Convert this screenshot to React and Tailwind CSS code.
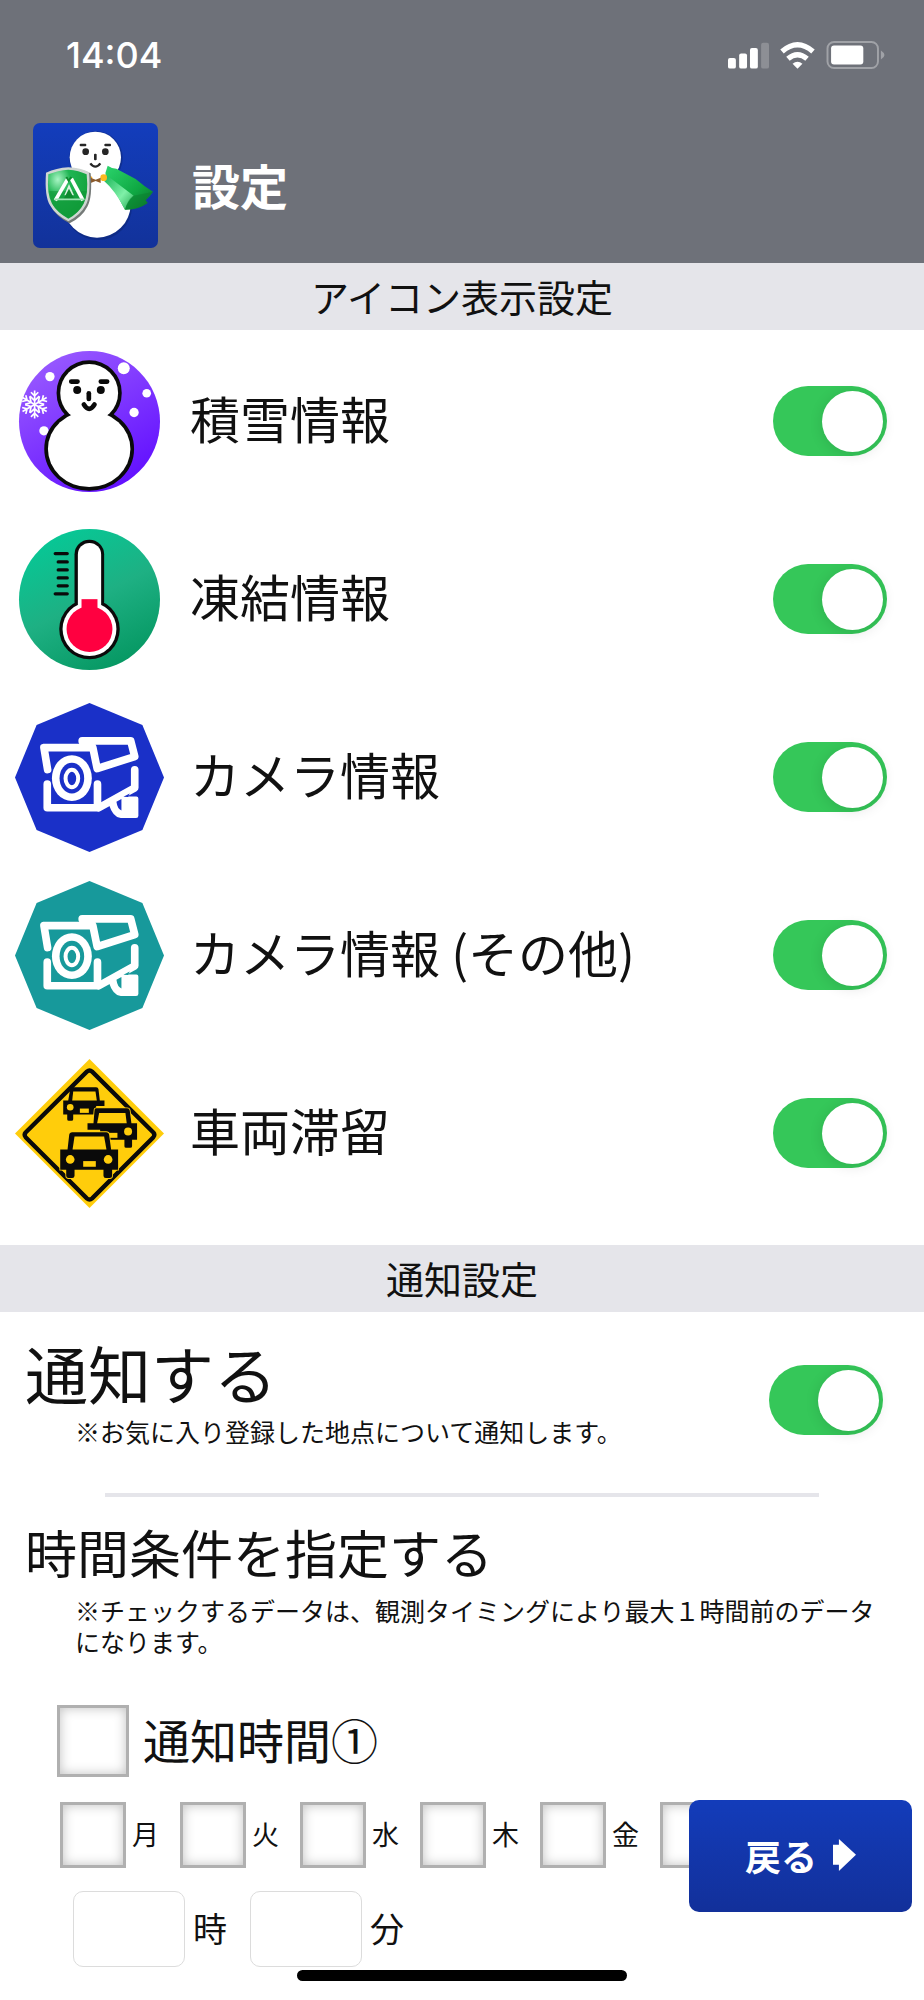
import React, { useState } from "react";

function StatusIcons() {
  return (
    <div className="flex items-center gap-[11px]">
      <svg viewBox="0 0 125 80" className="h-[27px] w-[41px]" aria-hidden="true">
        <rect x="0" y="48" width="24" height="32" rx="6" fill="#fff" />
        <rect x="34" y="34" width="24" height="46" rx="6" fill="#fff" />
        <rect x="67" y="17" width="24" height="63" rx="6" fill="#fff" />
        <rect x="101" y="1" width="24" height="79" rx="6" fill="#8d8f95" />
      </svg>
      <svg viewBox="0 0 106 82" className="h-[27px] w-[35px]" aria-hidden="true">
        <g fill="none" stroke="#fff" strokeWidth="16">
          <path d="M6 29 Q53 -12 100 29" />
          <path d="M24 51 Q53 26 82 51" />
        </g>
        <path d="M53 81 L38 66 Q53 54 68 66Z" fill="#fff" />
      </svg>
      <svg viewBox="0 0 178 86" className="h-[28px] w-[59px]" aria-hidden="true">
        <rect x="3" y="3" width="155" height="80" rx="20" fill="none" stroke="#a0a2a7" strokeWidth="6" />
        <rect x="14" y="14" width="99" height="58" rx="9" fill="#fff" />
        <path d="M167 29 Q178 36 178 43 Q178 50 167 57Z" fill="#a0a2a7" />
      </svg>
    </div>
  );
}

function AppLogo() {
  return (
    <svg viewBox="40 39 375 375" className="size-[125px] shrink-0 rounded-[7px]" role="img" aria-label="アプリアイコン">
      <defs>
        <linearGradient id="logoBg" x1="0" y1="0" x2="0" y2="1">
          <stop offset="0" stopColor="#133dbc" />
          <stop offset="1" stopColor="#12329a" />
        </linearGradient>
        <linearGradient id="logoCape" x1="0" y1="0" x2="1" y2="1">
          <stop offset="0" stopColor="#2bd46c" />
          <stop offset="0.6" stopColor="#0fa843" />
          <stop offset="1" stopColor="#0a6f28" />
        </linearGradient>
        <linearGradient id="logoFold" x1="0" y1="0" x2="1" y2="1">
          <stop offset="0" stopColor="#16b455" />
          <stop offset="0.6" stopColor="#7ff0a8" />
          <stop offset="1" stopColor="#22a850" />
        </linearGradient>
        <radialGradient id="logoShield" cx="0.25" cy="0.2" r="0.9">
          <stop offset="0" stopColor="#a8f5c4" />
          <stop offset="0.35" stopColor="#1fb553" />
          <stop offset="1" stopColor="#12a03a" />
        </radialGradient>
      </defs>
      <rect x="40" y="39" width="375" height="375" fill="url(#logoBg)" />
      <g fill="#0c2470" opacity="0.5">
        <circle cx="229" cy="144" r="80" />
        <circle cx="235" cy="288" r="102" />
      </g>
      <circle cx="227" cy="142" r="77" fill="#fff" />
      <circle cx="232" cy="282" r="101" fill="#fff" />
      <g fill="#262626">
        <rect x="180" y="101" width="20" height="8" rx="3" />
        <rect x="254" y="101" width="20" height="8" rx="3" />
        <circle cx="198" cy="125" r="10" />
        <circle cx="257" cy="125" r="10" />
        <rect x="223" y="131" width="8" height="20" rx="3" />
      </g>
      <path d="M212 160 Q227 180 242 160" fill="none" stroke="#262626" strokeWidth="7" />
      <path d="M257 190 L264 167 Q275 175 290 176 L348 207 Q372 228 400 245 Q392 258 378 271 L384 279 Q355 300 316 299Z" fill="url(#logoCape)" />
      <path d="M257 193 L342 257 Q322 275 316 299 Q285 240 254 214Z" fill="url(#logoFold)" />
      <path d="M340 257 L399 246 L377 271 L384 279 Q355 300 316 299 Q322 272 340 257Z" fill="#0b7a2c" opacity="0.45" />
      <path d="M210 195 L218 202 L216 216 L210 214Z" fill="#f2a81d" />
      <circle cx="252" cy="203" r="10" fill="#fbb91f" />
      <path d="M213 203 L228 209 L243 203 V219 L228 213 L213 219Z" fill="#8a5a2c" />
      <path d="M83 192 Q112 175 150 174 Q190 178 213 190 Q219 262 203 290 Q188 320 150 340 Q108 318 95 290 Q78 262 83 192Z" fill="#757a78" />
      <path d="M79 188 Q110 174 146 172 Q184 174 208 187 Q214 258 198 286 Q182 316 146 334 Q106 314 91 286 Q74 258 79 188Z" fill="#cfd6d2" />
      <path d="M86 193 Q114 181 146 179 Q178 181 201 193 Q207 255 192 281 Q178 308 146 326 Q112 307 97 281 Q81 255 86 193Z" fill="url(#logoShield)" />
      <path d="M89 243 H201 Q197 272 186 290 Q172 311 146 324 Q116 308 101 286 Q91 268 89 243Z" fill="#0f9435" opacity="0.55" />
      <g fill="none" stroke="#fff" strokeWidth="11">
        <path d="M107 271 L145 206" />
        <path d="M155 206 L190 271" />
      </g>
      <path d="M148 222 L163 256 H134Z" fill="#d8f2df" />
      <path d="M130 271 L148 236 L166 271Z" fill="#0d8a2f" />
      <path d="M104 268 H194" stroke="#9be3b2" strokeWidth="5" />
      <path d="M140 201 L147 212 L155 201" fill="none" stroke="#0d8a2f" strokeWidth="6" />
    </svg>
  );
}

function SnowIcon() {
  const arms = [0, 60, 120, 180, 240, 300];
  return (
    <svg viewBox="44 43 448 448" className="size-[149px] shrink-0" aria-hidden="true">
      <defs>
        <linearGradient id="snowBg" x1="0.2" y1="0" x2="0.8" y2="1">
          <stop offset="0" stopColor="#9a5cff" />
          <stop offset="1" stopColor="#5f0cff" />
        </linearGradient>
      </defs>
      <circle cx="268" cy="267" r="212" fill="url(#snowBg)" />
      <g fill="#fff">
        <circle cx="149" cy="132" r="14" />
        <circle cx="371" cy="107" r="18" />
        <circle cx="440" cy="182" r="13" />
        <circle cx="402" cy="240" r="14" />
        <circle cx="131" cy="295" r="14" />
      </g>
      <g stroke="#fff" strokeWidth="5" fill="none">
        {arms.map((angle) => (
          <path
            key={angle}
            d="M103 216 V174 M103 190 L92 179 M103 190 L114 179 M103 204 L89 191 M103 204 L117 191"
            transform={`rotate(${angle} 103 216)`}
          />
        ))}
      </g>
      <g fill="#fff" stroke="#0a0a0a" strokeWidth="22">
        <circle cx="267" cy="181" r="87" />
        <ellipse cx="267" cy="350" rx="124" ry="114" />
      </g>
      <g fill="#fff">
        <circle cx="267" cy="181" r="87" />
        <ellipse cx="267" cy="350" rx="124" ry="114" />
      </g>
      <g stroke="#0a0a0a" strokeWidth="14" strokeLinecap="round" fill="none">
        <path d="M213 147 H232 M302 147 H321" />
        <path d="M266 182 V199" />
        <path d="M251 216 Q267 242 283 216" />
      </g>
      <circle cx="231" cy="172" r="12" fill="#0a0a0a" />
      <circle cx="302" cy="172" r="12" fill="#0a0a0a" />
    </svg>
  );
}

function ThermometerIcon() {
  return (
    <svg viewBox="44 580 448 448" className="size-[149px] shrink-0" aria-hidden="true">
      <defs>
        <linearGradient id="thermoBg" x1="0.25" y1="0" x2="0.75" y2="1">
          <stop offset="0" stopColor="#05c997" />
          <stop offset="0.5" stopColor="#1eb083" />
          <stop offset="1" stopColor="#049660" />
        </linearGradient>
      </defs>
      <circle cx="268" cy="804" r="212" fill="url(#thermoBg)" />
      <g fill="#0a0a0a">
        <rect x="223" y="624" width="89" height="230" rx="44" />
        <circle cx="268" cy="893" r="91" />
      </g>
      <g fill="#fff">
        <rect x="233" y="634" width="70" height="225" rx="35" />
        <circle cx="268" cy="893" r="81" />
      </g>
      <g fill="#ff0040">
        <rect x="244" y="803" width="48" height="60" />
        <circle cx="268" cy="893" r="69" />
      </g>
      <g stroke="#0a0a0a" strokeWidth="10" strokeLinecap="round">
        <path d="M165 666 H201 M174 691 H201 M174 715 H201 M174 739 H201 M174 763 H201 M165 787 H201" />
      </g>
    </svg>
  );
}

function CameraIcon({ color }) {
  return (
    <svg viewBox="44 36 448 448" className="size-[149px] shrink-0" aria-hidden="true">
      <path d="M268 36 L427 102 L492 260 L427 418 L268 484 L109 418 L44 260 L109 102Z" fill={color} />
      <g fill="none" stroke="#fff" strokeWidth="23" strokeLinecap="round" strokeLinejoin="round">
        <path d="M142 236 L131 170 H278 L291 233 L404 197 L392 150 H246" />
        <path d="M141 280 V351 H292 V280" />
        <path d="M296 351 L404 291 V237" />
      </g>
      <ellipse cx="215" cy="262" rx="60" ry="69" fill="#fff" />
      <ellipse cx="215" cy="262" rx="37" ry="46" fill={color} />
      <ellipse cx="215" cy="263" rx="19" ry="26" fill="none" stroke="#fff" strokeWidth="12" />
      <path d="M327 343 L372 317 H409 Q415 317 415 324 V375 Q415 382 408 382 H362 Q338 380 327 343Z" fill="#fff" />
      <path d="M349 333 L364 325 V359 Q352 355 349 333Z M370 318 L389 308 L384 319Z" fill={color} />
    </svg>
  );
}

function TrafficIcon() {
  return (
    <svg viewBox="44 55 448 448" className="size-[149px] shrink-0" aria-hidden="true">
      <path d="M268 55 L492 279 L268 503 L44 279Z" fill="#ffcd0b" />
      <path
        d="M260 93 Q268 86 276 93 L460 276 Q466 283 460 290 L276 474 Q268 481 260 474 L76 290 Q70 283 76 276Z"
        fill="none"
        stroke="#0a0a0a"
        strokeWidth="13"
      />
      {/* far car */}
      <path d="M211 140 H288 Q294 140 295 146 L299 180 H313 V196 H288 V222 H219 V236 Q219 241 214 241 H206 Q201 241 201 236 V222 H189 V180 H204Z" fill="#0a0a0a" />
      <path d="M219 153 H286 L290 180 H216Z" fill="#ffcd0b" />
      <circle cx="210" cy="200" r="10" fill="#ffcd0b" />
      <rect x="239" y="204" width="27" height="13" fill="#ffcd0b" />
      {/* middle car */}
      <path d="M288 203 H381 Q388 203 389 210 L394 248 H411 V298 H396 V317 Q396 322 391 322 H378 Q373 322 373 317 V298 H300 V268 H262 V248 H280 L283 210 Q283 203 288 203Z" fill="#0a0a0a" stroke="#ffcd0b" strokeWidth="5" paintOrder="stroke" />
      <path d="M297 217 H376 L380 248 H291Z" fill="#ffcd0b" />
      <circle cx="384" cy="273" r="12" fill="#ffcd0b" />
      <rect x="325" y="277" width="27" height="15" fill="#ffcd0b" />
      {/* near car */}
      <path d="M216 275 H318 Q326 275 327 283 L333 327 H354 V388 H336 V406 Q336 413 329 413 H317 Q310 413 310 406 V388 H223 V406 Q223 413 216 413 H205 Q198 413 198 406 V388 H180 V327 H202 L207 283 Q208 275 216 275Z" fill="#0a0a0a" stroke="#ffcd0b" strokeWidth="5" paintOrder="stroke" />
      <path d="M223 288 H312 L319 327 H217Z" fill="#ffcd0b" />
      <circle cx="210" cy="357" r="13" fill="#ffcd0b" />
      <circle cx="324" cy="357" r="13" fill="#ffcd0b" />
      <rect x="249" y="362" width="38" height="17" fill="#ffcd0b" />
    </svg>
  );
}

function Toggle({ id, label }) {
  const [on, setOn] = useState(true);

  return (
    <button
      id={id}
      type="button"
      role="switch"
      aria-checked={on}
      aria-label={label}
      onClick={() => setOn(!on)}
      className={`flex h-[70px] w-[114px] shrink-0 items-center rounded-full px-1 ${
        on ? "justify-end bg-[#35c759]" : "justify-start bg-[#e5e5ea]"
      }`}
    >
      <span className="size-[61px] rounded-full bg-white shadow-[0_2px_14px_rgba(0,0,0,0.12)]" />
    </button>
  );
}

function SectionTitle({ children }) {
  return (
    <h2 className="flex h-[67px] items-center justify-center bg-[#e5e5ea] pb-0.5 text-[38px] leading-none">
      {children}
    </h2>
  );
}

function CheckBox({ id, className, label }) {
  return (
    <input
      id={id}
      type="checkbox"
      aria-label={label}
      className={`shrink-0 appearance-none border-3 border-[#b0b0b0] bg-white shadow-[inset_0_0_12px_rgba(0,0,0,0.25)] checked:bg-[#35c759] ${className}`}
    />
  );
}

const iconRows = [
  { id: "snow", label: "積雪情報", icon: <SnowIcon /> },
  { id: "freeze", label: "凍結情報", icon: <ThermometerIcon /> },
  { id: "camera", label: "カメラ情報", icon: <CameraIcon color="#1a30c8" /> },
  { id: "camera-other", label: "カメラ情報 (その他)", icon: <CameraIcon color="#17999b" /> },
  { id: "traffic", label: "車両滞留", icon: <TrafficIcon /> },
];

const days = ["月", "火", "水", "木", "金"];

export default function App() {
  return (
    <div className="min-h-screen overflow-x-hidden bg-white font-['Noto_Sans_CJK_JP',sans-serif] text-[#111]">
      <header className="bg-[#6e7179] pb-[15px] text-white">
        <div className="flex h-[110px] items-center justify-between pr-[39px] pl-[66px]">
          <span className="font-['Inter',sans-serif] text-[36px] leading-none font-medium">14:04</span>
          <StatusIcons />
        </div>
        <div className="flex items-center gap-[34px] pt-[13px] pl-[33px]">
          <AppLogo />
          <h1 className="pb-1 text-[48px] leading-none font-bold">設定</h1>
        </div>
      </header>

      <main>
        <SectionTitle>アイコン表示設定</SectionTitle>
        <ul className="pt-0.5 pb-[23px]">
          {iconRows.map((row) => (
            <li key={row.id} className="flex h-[178px] items-center pr-[37px] pl-[15px]">
              {row.icon}
              <label htmlFor={row.id} className="flex-1 pb-2 pl-[26px] text-[50px] leading-none">
                {row.label}
              </label>
              <Toggle id={row.id} label={row.label} />
            </li>
          ))}
        </ul>

        <SectionTitle>通知設定</SectionTitle>
        <section className="flex items-end justify-between pt-5 pr-[41px]">
          <div>
            <label htmlFor="notify" className="block pl-[25px] text-[63px] leading-[80px]">
              通知する
            </label>
            <p className="mt-1 pl-[75px] text-[25px] leading-[31px]">
              ※お気に入り登録した地点について通知します。
            </p>
          </div>
          <div className="pb-3">
            <Toggle id="notify" label="通知する" />
          </div>
        </section>

        <hr className="mx-[105px] mt-[46px] border-t-4 border-[#e5e5ea]" />

        <section className="mt-5">
          <h3 className="pl-[25px] text-[52px] leading-[70px]">時間条件を指定する</h3>
          <p className="mt-2 pr-10 pl-[75px] text-[25px] leading-[31px]">
            ※チェックするデータは、観測タイミングにより最大１時間前のデータになります。
          </p>

          <div className="mt-12 flex items-center gap-[14px] pl-[57px]">
            <CheckBox id="time-1" className="size-[72px]" />
            <label htmlFor="time-1" className="pb-1.5 text-[47px] leading-none">
              通知時間①
            </label>
          </div>

          <div className="mt-[25px] flex gap-[21px] overflow-hidden pl-[60px]">
            {days.map((day, index) => (
              <div key={day} className="flex shrink-0 items-center gap-[6px]">
                <CheckBox id={`day-${index}`} className="size-[66px]" />
                <label htmlFor={`day-${index}`} className="pb-1 text-[27px] leading-none">
                  {day}
                </label>
              </div>
            ))}
            <CheckBox id="day-5" label="土" className="size-[66px]" />
          </div>

          <div className="mt-[23px] flex items-center pb-[33px] pl-[73px] text-[34px] leading-none">
            <input id="hour" type="text" inputMode="numeric" className="h-[76px] w-[112px] rounded-[10px] border border-[#dcdcdc] text-center" />
            <label htmlFor="hour" className="pr-[23px] pb-0.5 pl-2">
              時
            </label>
            <input id="minute" type="text" inputMode="numeric" className="h-[76px] w-[112px] rounded-[10px] border border-[#dcdcdc] text-center" />
            <label htmlFor="minute" className="pb-0.5 pl-2">
              分
            </label>
          </div>
        </section>
      </main>

      <button
        type="button"
        className="fixed right-3 bottom-[88px] flex h-[112px] w-[223px] items-center justify-center gap-4 rounded-[10px] bg-linear-to-b from-[#133cba] to-[#12309a] pb-0.5 text-[36px] leading-none font-bold text-white"
      >
        戻る
        <svg viewBox="0 0 70 97" className="h-[32px] w-[23px]" aria-hidden="true">
          <path d="M0 17 H18 V0 L70 48 L18 97 V78 H0Z" fill="#fff" />
        </svg>
      </button>
      <div className="fixed bottom-[19px] left-1/2 h-[11px] w-[330px] -translate-x-1/2 rounded-full bg-black" />
    </div>
  );
}
